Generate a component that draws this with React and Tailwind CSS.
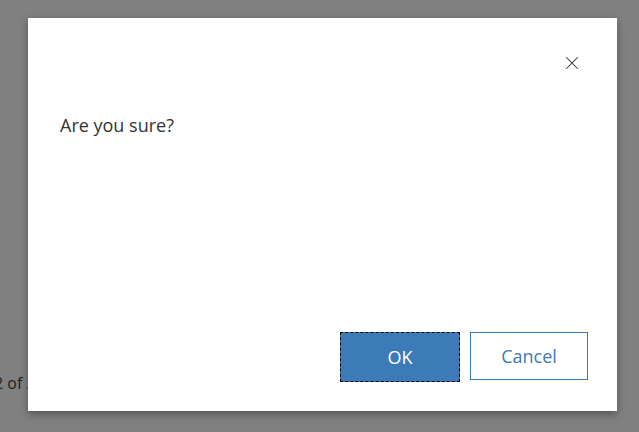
import { X } from 'lucide-react'

export default function App() {
  return (
    <div className="relative w-[639px] h-[432px] overflow-hidden bg-[#808080]" style={{ fontFamily: '"Open Sans", "Noto Sans", sans-serif' }}>
      {/* background page text behind the modal */}
      <div className="absolute left-[-6px] top-[371px] text-[16px] text-[#222]">2 of 2</div>

      {/* modal */}
      <div className="absolute left-[28px] top-[18px] w-[589px] h-[393px] bg-white shadow-[0_3px_8px_rgba(0,0,0,0.35)] flex flex-col">
        <div className="flex justify-end pt-[34px] pr-[34px]">
          <button className="w-[22px] h-[22px] flex items-center justify-center text-[#333]">
            <X size={24} strokeWidth={1.1} />
          </button>
        </div>
        <div className="pl-[32px] pt-[38px] text-[18px] text-[#333]">Are you sure?</div>
        <div className="mt-auto flex justify-end gap-[10px] pr-[29px] pb-[29px]">
          <button className="w-[120px] h-[50px] bg-[#3c7ab8] text-white text-[18px] border border-dashed border-black">OK</button>
          <button className="w-[118px] h-[48px] mb-[1px] bg-white text-[#3c7ab8] text-[18px] border border-[#3c7ab8]">Cancel</button>
        </div>
      </div>
    </div>
  )
}
